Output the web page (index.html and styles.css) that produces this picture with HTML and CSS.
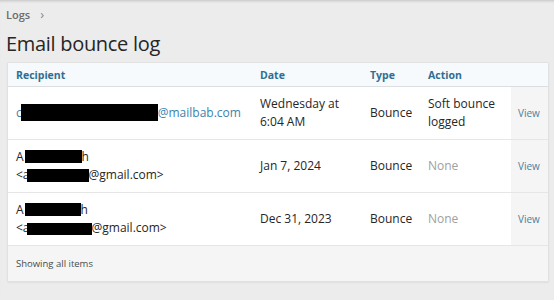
FILE: index.html
```html
<!DOCTYPE html>
<html>
<head>
<meta charset="utf-8">
<link rel="stylesheet" href="styles.css">
</head>
<body>
<div class="page">
  <nav class="crumbs"><span class="crumb">Logs</span><span class="chev">&#x203A;</span></nav>
  <h1 class="title">Email bounce log</h1>
  <div class="card">
    <table class="log">
      <colgroup>
        <col class="c-rec"><col class="c-date"><col class="c-type"><col class="c-act"><col class="c-view">
      </colgroup>
      <thead>
        <tr><th>Recipient</th><th>Date</th><th>Type</th><th>Action</th><th></th></tr>
      </thead>
      <tbody>
        <tr>
          <td class="link">c<span class="redact r1"></span>@mailbab.com</td>
          <td>Wednesday at<br>6:04 AM</td>
          <td>Bounce</td>
          <td>Soft bounce<br>logged</td>
          <td class="view"><a>View</a></td>
        </tr>
        <tr>
          <td>A<span class="redact r2"></span>h<br>&lt;a<span class="redact r3"></span>@gmail.com&gt;</td>
          <td>Jan 7, 2024</td>
          <td>Bounce</td>
          <td class="muted">None</td>
          <td class="view"><a>View</a></td>
        </tr>
        <tr>
          <td>A<span class="redact r4"></span>h<br>&lt;a<span class="redact r5"></span>@gmail.com&gt;</td>
          <td>Dec 31, 2023</td>
          <td>Bounce</td>
          <td class="muted">None</td>
          <td class="view"><a>View</a></td>
        </tr>
      </tbody>
    </table>
    <div class="foot">Showing all items</div>
  </div>
</div>
</body>
</html>
```

FILE: styles.css
```css
html, body {
  margin: 0;
  padding: 0;
}
body {
  width: 554px;
  height: 300px;
  overflow: hidden;
  background: #ececec;
  font-family: "Open Sans", "Noto Sans", sans-serif;
  color: #262626;
  box-shadow: inset 0 3px 3px -2px rgba(0,0,0,0.18);
}
.page {
  padding: 6px 7px 0 7px;
}
.crumbs {
  display: flex;
  align-items: center;
  gap: 10px;
  height: 16px;
  margin-left: -1px;
  font-size: 11px;
  font-weight: 600;
  color: #6b6b6b;
}
.chev {
  font-size: 13px;
  font-weight: 400;
  color: #888;
  line-height: 1;
}
.title {
  margin: 9px 0 0 -1px;
  font-size: 20px;
  font-weight: 400;
  line-height: 26px;
  height: 31px;
  color: #262626;
  letter-spacing: -0.3px;
}
.card {
  width: 540px;
  background: #fff;
  border: 1px solid #e1e1e1;
  border-radius: 2px;
  box-shadow: 0 1px 2px rgba(0,0,0,0.06);
  overflow: hidden;
}
.log {
  width: 100%;
  border-collapse: collapse;
  table-layout: fixed;
  font-size: 12px;
}
.c-rec { width: 244px; }
.c-date { width: 110px; }
.c-type { width: 58px; }
.c-act { width: 91px; }
.c-view { width: 37px; }
thead tr {
  background: #f6fafd;
  height: 23px;
}
th {
  text-align: left;
  font-size: 10.5px;
  font-weight: 700;
  color: #2f6e91;
  padding: 1px 0 0 8px;
  border-bottom: 1px solid #dcdfe2;
}
td {
  padding: 0 0 0 8px;
  height: 52px;
  line-height: 18px;
  vertical-align: middle;
  border-bottom: 1px solid #e6e6e6;
  white-space: nowrap;
}
.link {
  color: #3a83ad;
}
.muted {
  color: #a0a0a0;
}
.view {
  background: #f5f5f5;
  padding-left: 7px;
}
.view a {
  font-size: 10px;
  color: #4a7f9f;
}
.redact {
  display: inline-block;
  background: #000;
  vertical-align: -4px;
}
.r1 { width: 137px; height: 17px; margin-left: -1px; }
.r2 { width: 57px; height: 13px; margin-left: 1px; vertical-align: -2px; }
.r3 { width: 62px; height: 13px; margin-left: -3px; vertical-align: -3px; }
.r4 { width: 56px; height: 13px; margin-left: 1px; vertical-align: -2px; }
.r5 { width: 65px; height: 12px; margin-left: -3px; vertical-align: -3px; }
.foot {
  height: 35px;
  background: #f5f5f5;
  font-size: 9.5px;
  color: #4a4a4a;
  padding-left: 8px;
  display: flex;
  align-items: center;
}
```
